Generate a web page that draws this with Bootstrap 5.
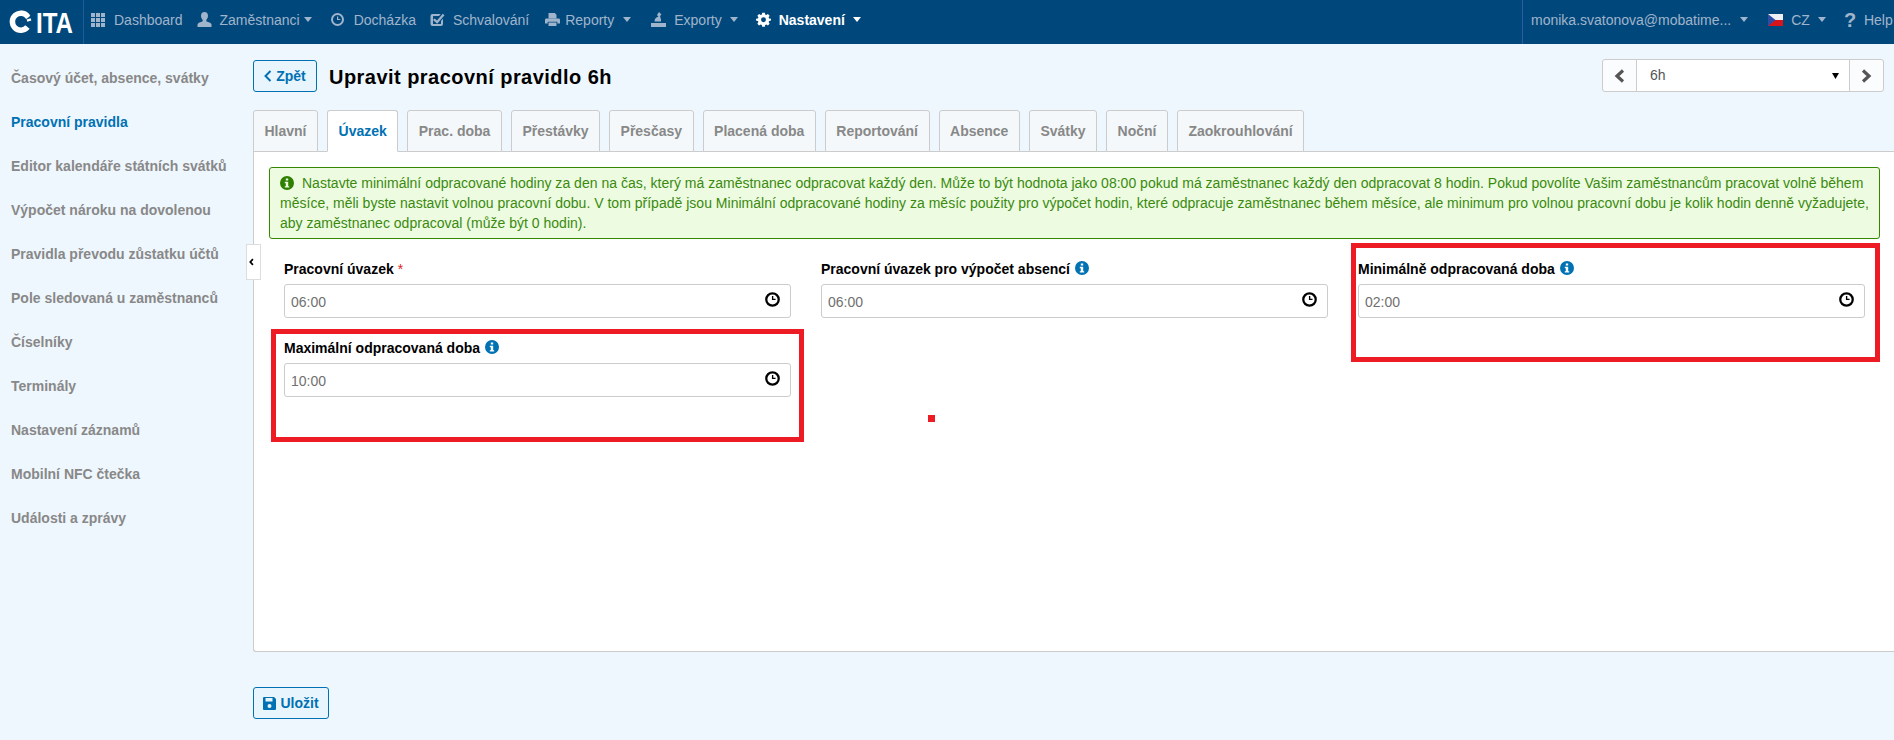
<!DOCTYPE html>
<html lang="cs">
<head>
<meta charset="utf-8">
<title>Upravit pracovní pravidlo</title>
<link rel="stylesheet" href="https://cdn.jsdelivr.net/npm/bootstrap@5.3.0/dist/css/bootstrap.min.css">
<style>
html,body{height:100%;overflow:hidden}
body{font-family:"Liberation Sans",Arial,sans-serif;font-size:14px;line-height:20px;background:#eff7fe;color:#000}
.ic{width:15px;height:15px;fill:currentColor;flex:none}
.top-bar{height:44px;background:#00487b;color:#a0b4cc;flex-wrap:nowrap;overflow:hidden}
.brand-box{width:84px;height:44px;border-right:1px solid #1f5c9a;flex:none}
.top-links{gap:14px;padding-left:7px;padding-bottom:5px}
.top-links .nav-link,.right-block .nav-link{padding:0;color:#a0b4cc;display:flex;align-items:center;gap:8px;white-space:nowrap}
.top-links .nav-link.on{color:#fff;font-weight:700}
.wide-link{gap:9px!important}
.print-link{gap:5px!important}
.step-2{margin-left:2px}
.step-4{margin-left:4px}
.step-6{margin-left:6px}
.top-caret{display:inline-block;border-left:4.5px solid transparent;border-right:4.5px solid transparent;border-top:5px solid currentColor;width:0;height:0}
.caret-tight{margin-left:-4px}
.right-block{width:372px;height:44px;border-left:1px solid #2a5ca8;flex:none;padding:0 0 5px 8px;gap:10px}
.right-block .nav-link.mail-link{gap:9px}
.flag-link{margin-left:10px}
.help-link{margin-left:8px}
.help-link.nav-link{gap:9px!important}
.flag{width:15px;height:12px;flex:none}
.qmark{font-size:20px;font-weight:700;width:11px;text-align:center}
.side-col{width:253px;flex:none;padding-top:12px}
.side-link{display:block;height:44px;line-height:44px;padding:0 0 0 11px;font-weight:700;color:#888;text-decoration:none}
.side-link.on{color:#0071b3}
.main-col{flex:1;min-width:0;padding:15px 10px 0 0}
.btn-soft{--bs-btn-color:#0071b3;--bs-btn-border-color:#0071b3;--bs-btn-bg:#e9f5fd;--bs-btn-hover-bg:#e9f5fd;--bs-btn-hover-color:#0071b3;--bs-btn-hover-border-color:#0071b3;--bs-btn-font-size:14px;--bs-btn-font-weight:700;--bs-btn-border-radius:3px;--bs-btn-padding-x:0;--bs-btn-padding-y:0;height:32px;display:inline-flex;align-items:center;justify-content:center;gap:4px;line-height:20px}
.back-btn{width:64px}
.save-btn{width:76px;margin-top:35px}
.save-btn .ic{width:13px;height:13px}
.page-title{font-size:20px;font-weight:700;margin:0 0 0 12px;padding-top:4px;letter-spacing:.46px;line-height:29px}
.picker{width:282px;height:33px;flex-wrap:nowrap}
.picker .btn{--bs-btn-bg:#fbfcfd;--bs-btn-border-color:#ccc;--bs-btn-color:#555;--bs-btn-border-radius:3px;--bs-btn-padding-x:0;--bs-btn-padding-y:0;width:35px;display:flex;align-items:center;justify-content:center}
.picker .form-select{font-size:14px;color:#555;padding:0 0 0 13px;height:33px;border-color:#ccc;border-radius:0;background-position:right 9px center;background-size:9px 6px;background-image:url("data:image/svg+xml,%3csvg xmlns='http://www.w3.org/2000/svg' viewBox='0 0 9 6'%3e%3cpath d='M1 0h7L4.500 6z'/%3e%3c/svg%3e")}
.tab-row{margin-top:18px;gap:9px;border-bottom:0;height:41px;position:relative;z-index:1}
.tab-row .nav-link{height:42px;padding:0 10.5px;line-height:40px;font-weight:700;color:#888;background:#f4f8fb;border:1px solid #ccc;border-radius:3px 3px 0 0;margin:0}
.tab-row .nav-link.active{color:#0071b3;background:#fff;border-color:#ccc #ccc #fff}
.panel{background:#fff;border:1px solid #ccc;border-right:0;border-radius:0 0 0 3px;height:501px;margin-right:-12px;padding:15px 0 0 15px;position:relative}
.hint{width:1611px;height:72px;margin:0 0 20px;padding:5px 10px;border:1px solid #338a00;border-radius:3px;background:#edfbe1;color:#3a8a0e;line-height:20px;white-space:nowrap;letter-spacing:.012px}
.hint .ic{width:14px;height:14px;color:#2f8000;vertical-align:-2px;margin-right:8px}
.fields{width:1611px}
.fld{padding:0 15px 20px;height:79px;position:relative}
.fld-label{display:block;font-weight:700;margin:0 0 5px;height:20px;color:#000}
.req{color:#e02020;font-weight:400}
.fld-info{width:14px;height:14px;color:#0071b3;vertical-align:-1px;margin-left:1px}
.fld-box{position:relative}
.fld-box .form-control{height:34px;font-size:14px;color:#707070;padding:1px 6px 0;border:1px solid #ccc;border-radius:3px;box-shadow:none}
.clock-over{position:absolute;right:10px;top:7px;width:17px;height:17px;color:#000}
.note-box{position:absolute;border:5px solid #ed1c24;pointer-events:none}
.note-a{left:2px;right:2px;top:-9px;height:113px}
.note-b{left:8.5px;right:0;top:-16px;height:119px}
.note-dot{position:absolute;left:674px;top:263px;width:7px;height:7px;background:#ed1c24}
.fold-tab{position:absolute;left:-8px;top:92px;width:15px;height:36px;background:#fff;border:1px solid #ddd;display:flex;align-items:center;justify-content:flex-start;padding-left:2px;color:#000}
</style>
</head>
<body>
<svg width="0" height="0" class="position-absolute">
  <symbol id="i-grid" viewBox="0 0 15 15"><path d="M0 1h4v4H0zM5 1h4v4H5zM10 1h4v4h-4zM0 6h4v4H0zM5 6h4v4H5zM10 6h4v4h-4zM0 11h4v4H0zM5 11h4v4H5zM10 11h4v4h-4z"/></symbol>
  <symbol id="i-user" viewBox="0 0 15 15"><path d="M7.500 0C5.300 0 4 1.600 4 3.800c0 1.700.7 3.200 1.700 4.100v1.300C3.500 10.300 1 10.500.5 12.300V15h14v-2.700c-.5-1.800-3-2-5.200-3.100V7.900c1-.9 1.700-2.400 1.700-4.100C11 1.600 9.700 0 7.500 0z"/></symbol>
  <symbol id="i-clock" viewBox="0 0 15 15"><path d="M7.500 1a6.500 6.500 0 1 0 0 13 6.500 6.500 0 0 0 0-13zm0 2a4.500 4.500 0 1 1 0 9 4.500 4.500 0 0 1 0-9zM7 4.500V8h3.200V6.900H8.200V4.500z"/></symbol>
  <symbol id="i-check" viewBox="0 0 15 15"><path d="M2.500 2h8.200L9 4H3.500a.5.500 0 0 0-.5.500v7a.5.500 0 0 0 .500.5h7a.5.500 0 0 0 .5-.5V9l2-2.300V12a2 2 0 0 1-2 2H2.500a2 2 0 0 1-2-2V4a2 2 0 0 1 2-2zM4.500 6.500 7 8.600 12.800 1.800 14.500 3.200 7.200 11.700 3 8z"/></symbol>
  <symbol id="i-print" viewBox="0 0 17 15"><path d="M4 0h7l2 2v4H4zM1.500 6.500h14A1.500 1.500 0 0 1 17 8v4h-3v-2H3v2H0V8a1.500 1.500 0 0 1 1.500-1.500zM4 11h9v4H4z"/></symbol>
  <symbol id="i-export" viewBox="0 0 15 15"><path d="M0 11h15v4H0zM8 0l2.500 2.500-1.500 1.500 1 3.500V9.500H3.500C3.500 7 5 5 7.500 4.700L6 3z"/></symbol>
  <symbol id="i-gear" viewBox="0 0 15 15"><path fill-rule="evenodd" d="M6 0h3l.4 2.100 1.300.6L12.500 1.500l2 2-1.200 1.800.6 1.300L16 7v2l-2.100.4-.6 1.300 1.200 1.800-2 2-1.800-1.200-1.300.6L9 16H6l-.4-2.100-1.300-.6-1.800 1.200-2-2 1.200-1.800-.6-1.300L-1 9V7l2.100-.4.600-1.300L.5 3.500l2-2 1.800 1.200 1.300-.6zM7.500 5.200a2.800 2.800 0 1 0 0 5.600 2.800 2.800 0 0 0 0-5.600z" transform="translate(.9 .7) scale(.88)"/></symbol>
  <symbol id="i-floppy" viewBox="0 0 13 13"><path fill-rule="evenodd" d="M1 0h10l2 2v10a1 1 0 0 1-1 1H1a1 1 0 0 1-1-1V1a1 1 0 0 1 1-1zm1.500 1v3.500h7V1zM6.500 7a2 2 0 1 0 0 4 2 2 0 0 0 0-4z"/></symbol>
  <symbol id="i-info" viewBox="0 0 14 14"><path fill-rule="evenodd" d="M7 0a7 7 0 1 1 0 14A7 7 0 0 1 7 0zM5.800 2.500v2h2.400v-2zM4.800 5.800v1.400h1v3H4.800v1.300h4.400v-1.300h-1V5.800z"/></symbol>
</svg>

<nav class="top-bar navbar p-0 d-flex align-items-stretch justify-content-start">
  <a class="brand-box d-block" href="#" aria-label="iTA">
    <svg width="84" height="44" viewBox="0 0 84 44">
      <path d="M28 17A8.500 8.500 0 1 0 27.500 27" fill="none" stroke="#fff" stroke-width="5.500"/>
      <g stroke="#fff" stroke-width="2.400"><path d="M22 11l-.6 4.400M25.800 12.400l-2.200 3.700M29 15.300l-3.300 2.800M31 19.300l-4 1.300"/></g>
      <text x="36" y="33" fill="#fff" font-family="Liberation Sans" font-weight="700" font-size="30" textLength="37" lengthAdjust="spacingAndGlyphs">ITA</text>
    </svg>
  </a>
  <ul class="nav top-links align-items-center flex-nowrap flex-grow-1">
    <li class="nav-item"><a class="nav-link" href="#"><svg class="ic"><use href="#i-grid"/></svg>Dashboard</a></li>
    <li class="nav-item"><a class="nav-link" href="#"><svg class="ic"><use href="#i-user"/></svg>Zaměstnanci<span class="top-caret caret-tight"></span></a></li>
    <li class="nav-item ms-1"><a class="nav-link wide-link" href="#"><svg class="ic"><use href="#i-clock"/></svg>Docházka</a></li>
    <li class="nav-item"><a class="nav-link" href="#"><svg class="ic"><use href="#i-check"/></svg>Schvalování</a></li>
    <li class="nav-item step-2"><a class="nav-link print-link" href="#"><svg class="ic" viewBox="0 0 17 15"><use href="#i-print"/></svg>Reporty<span class="top-caret ms-1"></span></a></li>
    <li class="nav-item step-6"><a class="nav-link" href="#"><svg class="ic"><use href="#i-export"/></svg>Exporty<span class="top-caret"></span></a></li>
    <li class="nav-item step-4"><a class="nav-link on" href="#"><svg class="ic"><use href="#i-gear"/></svg>Nastavení<span class="top-caret"></span></a></li>
  </ul>
  <div class="right-block d-flex align-items-center">
    <a class="nav-link mail-link" href="#">monika.svatonova@mobatime...<span class="top-caret"></span></a>
    <a class="nav-link flag-link" href="#">
      <svg class="flag" viewBox="0 0 15 12"><rect width="15" height="6" fill="#eef0f5"/><rect y="6" width="15" height="6" fill="#d7141a"/><path d="M0 0l7.500 6L0 12z" fill="#2d4ca5"/></svg>CZ<span class="top-caret"></span></a>
    <a class="nav-link help-link" href="#"><span class="qmark">?</span>Help</a>
  </div>
</nav>

<div class="d-flex">
  <aside class="side-col">
    <a class="side-link" href="#">Časový účet, absence, svátky</a>
    <a class="side-link on" href="#">Pracovní pravidla</a>
    <a class="side-link" href="#">Editor kalendáře státních svátků</a>
    <a class="side-link" href="#">Výpočet nároku na dovolenou</a>
    <a class="side-link" href="#">Pravidla převodu zůstatku účtů</a>
    <a class="side-link" href="#">Pole sledovaná u zaměstnanců</a>
    <a class="side-link" href="#">Číselníky</a>
    <a class="side-link" href="#">Terminály</a>
    <a class="side-link" href="#">Nastavení záznamů</a>
    <a class="side-link" href="#">Mobilní NFC čtečka</a>
    <a class="side-link" href="#">Události a zprávy</a>
  </aside>
  <main class="main-col">
    <div class="d-flex align-items-center">
      <a class="btn btn-soft back-btn" href="#"><svg width="8" height="12" viewBox="0 0 8 12" fill="none" stroke="currentColor" stroke-width="2"><path d="M6.500 1 1.500 6l5 5"/></svg>Zpět</a>
      <h1 class="page-title">Upravit pracovní pravidlo 6h</h1>
      <div class="input-group picker ms-auto">
        <button class="btn" type="button" aria-label="Předchozí"><svg width="11" height="14" viewBox="0 0 11 14" fill="none" stroke="currentColor" stroke-width="3.200"><path d="M9 1.500 3 7l6 5.500"/></svg></button>
        <select class="form-select"><option>6h</option></select>
        <button class="btn" type="button" aria-label="Další"><svg width="11" height="14" viewBox="0 0 11 14" fill="none" stroke="currentColor" stroke-width="3.200"><path d="M2 1.500 8 7l-6 5.500"/></svg></button>
      </div>
    </div>
    <ul class="nav nav-tabs tab-row flex-nowrap">
      <li class="nav-item"><a class="nav-link" href="#">Hlavní</a></li>
      <li class="nav-item"><a class="nav-link active" href="#">Úvazek</a></li>
      <li class="nav-item"><a class="nav-link" href="#">Prac. doba</a></li>
      <li class="nav-item"><a class="nav-link" href="#">Přestávky</a></li>
      <li class="nav-item"><a class="nav-link" href="#">Přesčasy</a></li>
      <li class="nav-item"><a class="nav-link" href="#">Placená doba</a></li>
      <li class="nav-item"><a class="nav-link" href="#">Reportování</a></li>
      <li class="nav-item"><a class="nav-link" href="#">Absence</a></li>
      <li class="nav-item"><a class="nav-link" href="#">Svátky</a></li>
      <li class="nav-item"><a class="nav-link" href="#">Noční</a></li>
      <li class="nav-item"><a class="nav-link" href="#">Zaokrouhlování</a></li>
    </ul>
    <section class="panel">
      <button class="fold-tab" type="button" aria-label="Sbalit"><svg width="7" height="10" viewBox="0 0 7 10" fill="none" stroke="currentColor" stroke-width="2.400"><path d="M5.500 1 1.800 5l3.700 4"/></svg></button>
      <div class="alert hint" role="alert"><svg class="ic"><use href="#i-info"/></svg>Nastavte minimální odpracované hodiny za den na čas, který má zaměstnanec odpracovat každý den. Může to být hodnota jako 08:00 pokud má zaměstnanec každý den odpracovat 8 hodin. Pokud povolíte Vašim zaměstnancům pracovat volně během<br>měsíce, měli byste nastavit volnou pracovní dobu. V tom případě jsou Minimální odpracované hodiny za měsíc použity pro výpočet hodin, které odpracuje zaměstnanec během měsíce, ale minimum pro volnou pracovní dobu je kolik hodin denně vyžadujete,<br>aby zaměstnanec odpracoval (může být 0 hodin).</div>
      <div class="row gx-0 fields">
        <div class="col-4 fld">
          <label class="fld-label">Pracovní úvazek <span class="req">*</span></label>
          <div class="fld-box"><input class="form-control" type="text" value="06:00"><svg class="clock-over"><use href="#i-clock"/></svg></div>
        </div>
        <div class="col-4 fld">
          <label class="fld-label">Pracovní úvazek pro výpočet absencí <svg class="ic fld-info"><use href="#i-info"/></svg></label>
          <div class="fld-box"><input class="form-control" type="text" value="06:00"><svg class="clock-over"><use href="#i-clock"/></svg></div>
        </div>
        <div class="col-4 fld">
          <div class="note-box note-b"></div>
          <label class="fld-label">Minimálně odpracovaná doba <svg class="ic fld-info"><use href="#i-info"/></svg></label>
          <div class="fld-box"><input class="form-control" type="text" value="02:00"><svg class="clock-over"><use href="#i-clock"/></svg></div>
        </div>
        <div class="col-4 fld">
          <div class="note-box note-a"></div>
          <label class="fld-label">Maximální odpracovaná doba <svg class="ic fld-info"><use href="#i-info"/></svg></label>
          <div class="fld-box"><input class="form-control" type="text" value="10:00"><svg class="clock-over"><use href="#i-clock"/></svg></div>
        </div>
      </div>
      <div class="note-dot"></div>
    </section>
    <a class="btn btn-soft save-btn" href="#"><svg class="ic"><use href="#i-floppy"/></svg>Uložit</a>
  </main>
</div>
<script src="https://cdn.jsdelivr.net/npm/bootstrap@5.3.0/dist/js/bootstrap.bundle.min.js"></script>
</body>
</html>
